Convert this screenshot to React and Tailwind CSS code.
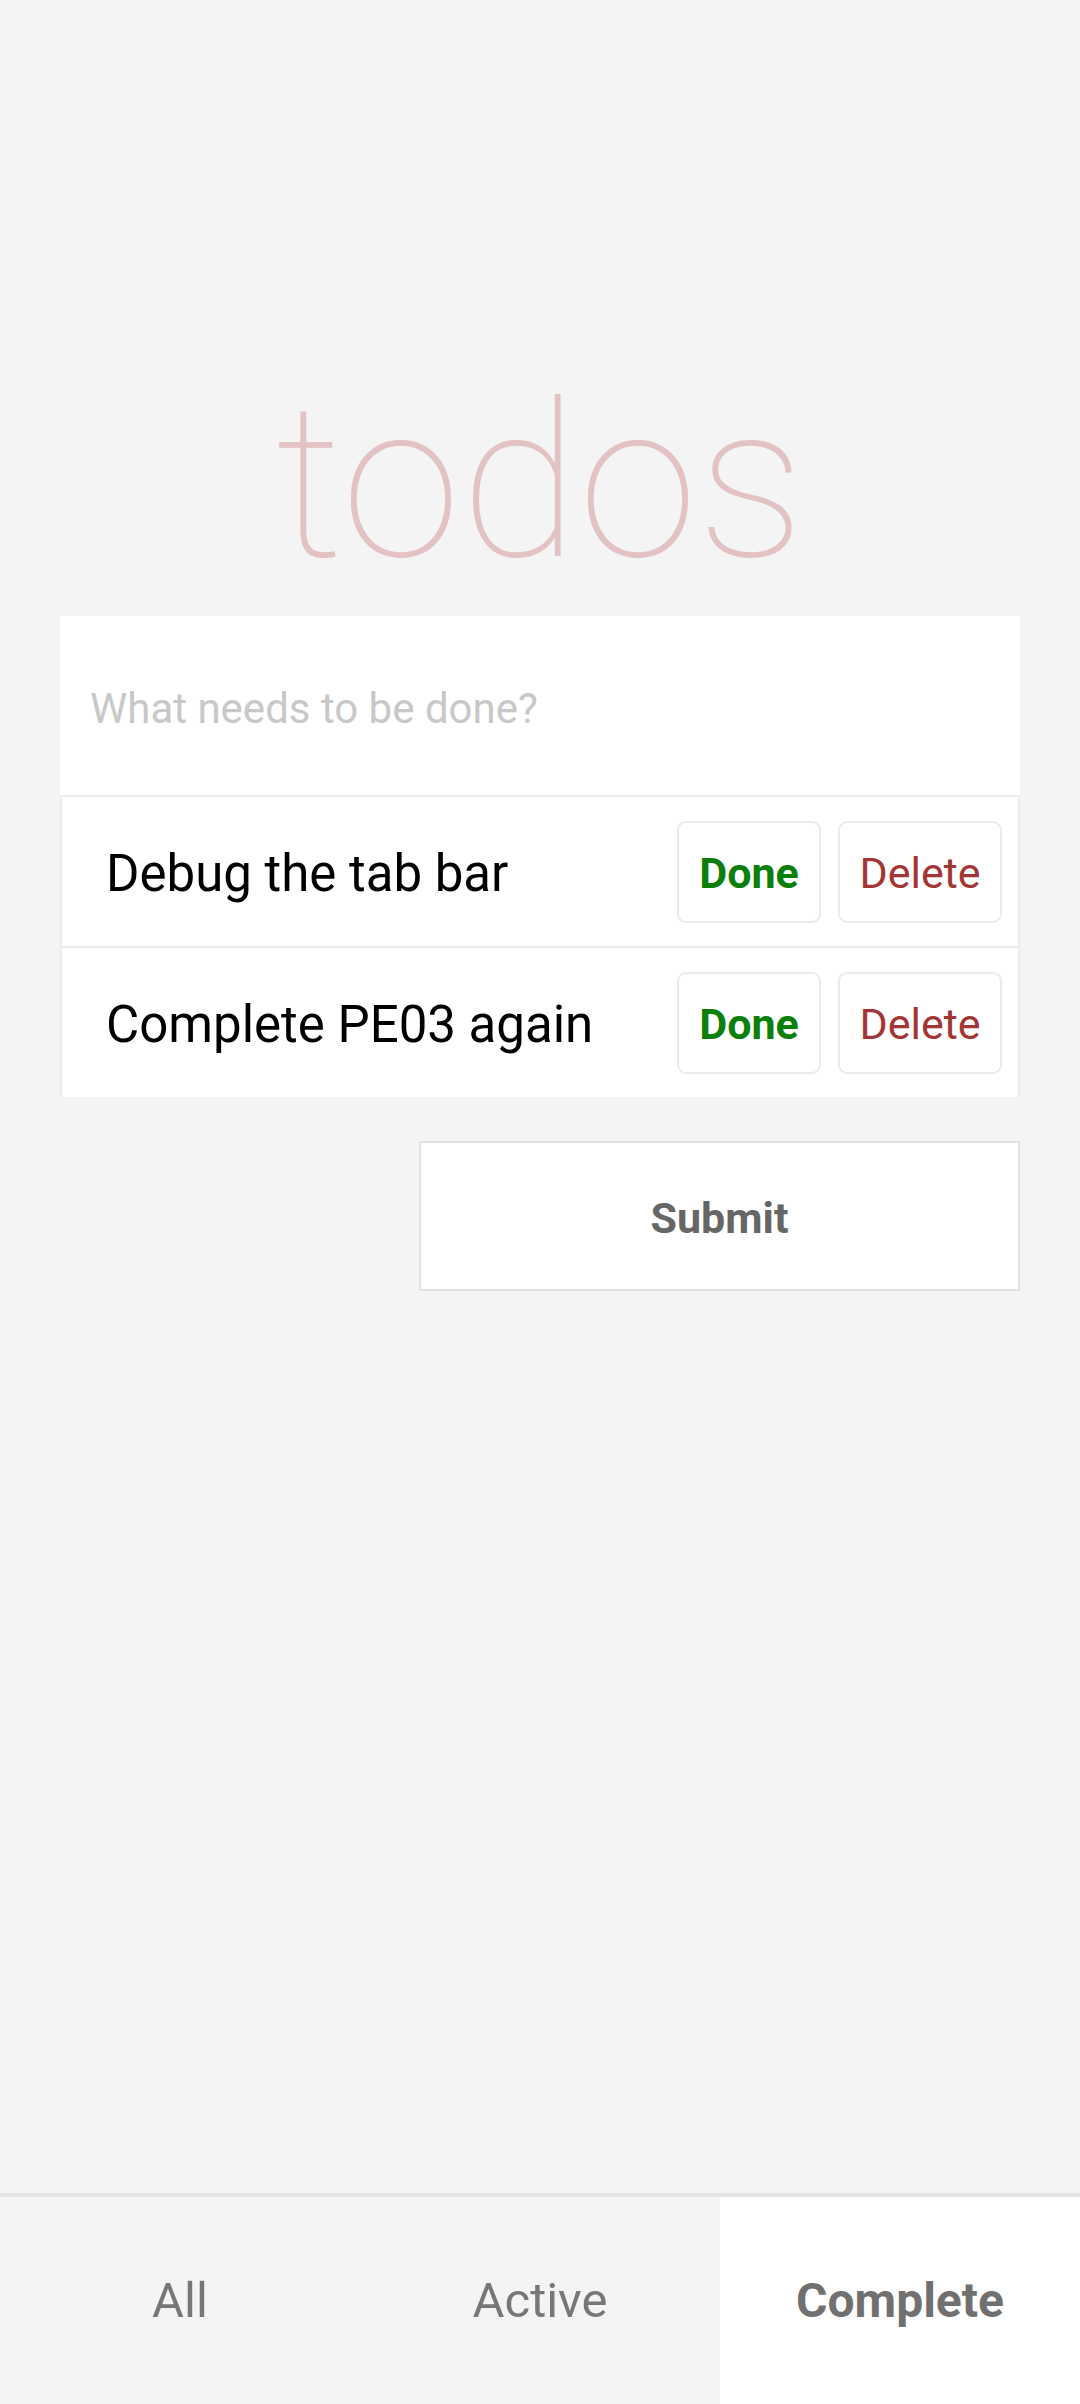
import React from "react";

const todos = ["Debug the tab bar", "Complete PE03 again"];

const TodoRow = ({ text }) => (
  <div className="h-[151px] border-t-2 border-x-2 border-[#ececec] bg-white flex items-center pl-[44px] pr-[16px]">
    <span className="flex-1 text-[51px] text-black pt-[5px]">{text}</span>
    <button className="h-[102px] w-[144px] border-2 border-[#ebebeb] rounded-[9px] bg-white text-[43px] font-bold text-[#0a7f0a] pt-[3px]">
      Done
    </button>
    <button className="ml-[17px] h-[102px] w-[164px] border-2 border-[#ebebeb] rounded-[9px] bg-white text-[43px] text-[#a33535] pt-[3px]">
      Delete
    </button>
  </div>
);

const App = () => {
  return (
    <div
      className="min-h-[2404px] bg-[#f4f4f4] flex flex-col"
      style={{ fontFamily: "Roboto, 'Noto Sans', sans-serif" }}
    >
      <div className="px-[60px] pt-[375px]">
        <h1 className="h-[216px] text-center text-[216px] leading-none font-thin text-[#e2c2c2]">
          todos
        </h1>
        <div className="mt-[25px] h-[179px] bg-white flex items-center pl-[30px] pt-[5px]">
          <span className="text-[42px] text-[#c8c8c8]">What needs to be done?</span>
        </div>
        {todos.map((t) => (
          <TodoRow key={t} text={t} />
        ))}
        <div className="mt-[44px] flex justify-end">
          <button className="w-[601px] h-[150px] border-2 border-[#e2e2e2] bg-white text-[43px] font-bold text-[#666666] pt-[4px]">
            Submit
          </button>
        </div>
      </div>

      <div className="mt-auto h-[211px] border-t-4 border-[#e3e3e3] grid grid-cols-3">
        <div className="flex items-center justify-center text-[49px] text-[#777777]">All</div>
        <div className="flex items-center justify-center text-[49px] text-[#777777]">Active</div>
        <div className="flex items-center justify-center bg-white text-[48px] font-bold text-[#707070]">
          Complete
        </div>
      </div>
    </div>
  );
};

export default App;
